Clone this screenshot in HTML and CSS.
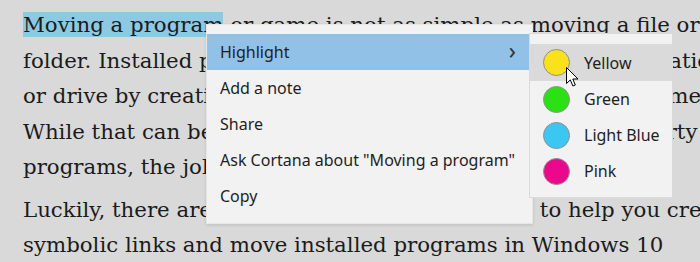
FILE: index.html
```html
<!DOCTYPE html>
<html lang="en">
<head>
  <meta charset="UTF-8">
  <title>Reader - Highlight</title>
  <link rel="stylesheet" href="styles.css">
</head>
<body>
  <div class="page">
    <p class="para"><span class="mark">Moving a program</span> or game is not as simple as moving a file or<br>folder. Installed programs can only be moved to another location<br>or drive by creating symbolic links, but it is quite cumbersome.<br>While that can be done manually, there are several third-party<br>programs, the job becomes much easier with them.</p>
    <p class="para">Luckily, there are two good free tools out there to help you create<br>symbolic links and move installed programs in Windows 10</p>
  </div>

  <div class="menu">
    <div class="item active">Highlight <span class="chev">&#x203A;</span></div>
    <div class="item">Add a note</div>
    <div class="item">Share</div>
    <div class="item">Ask Cortana about "Moving a program"</div>
    <div class="item">Copy</div>
  </div>

  <div class="submenu">
    <div class="sub hover"><span class="dot yellow"></span>Yellow</div>
    <div class="sub"><span class="dot green"></span>Green</div>
    <div class="sub"><span class="dot blue"></span>Light Blue</div>
    <div class="sub"><span class="dot pink"></span>Pink</div>
  </div>

  <svg class="cursor" width="13" height="21" viewBox="0 0 13 21">
    <path d="M0.5 0.5 L0.5 16.5 L4.3 12.9 L6.9 19 L9.3 18 L6.8 12 L12 12 Z" fill="#fff" stroke="#000" stroke-width="1" stroke-linejoin="miter"/>
  </svg>
</body>
</html>
```

FILE: styles.css
```css
* { box-sizing: border-box; }
html, body { margin: 0; height: 100%; overflow: hidden; }
body { background: #d9d9d9; font-family: "DejaVu Serif", serif; color: #1b1b1b; }
.page { padding: 7px 0 0 23px; white-space: nowrap; }
.para { margin: 0 0 7px; font-size: 21.3px; line-height: 35.5px; }
.mark { background: #8ec9e3; }

.menu { position: absolute; left: 206px; top: 24px; width: 327px; height: 200px; padding: 9px 0 11px; background: #f2f2f2; border: 1px solid #e6e6e6; box-shadow: 0 1px 3px rgba(0,0,0,0.12); font-family: "Noto Sans", sans-serif; font-size: 16px; color: #1e1e1e; }
.item { height: 36px; display: flex; align-items: center; padding-left: 13px; padding-right: 16px; }
.item.active { background: #91c1e7; justify-content: space-between; }
.chev { font-size: 23px; color: #333; line-height: 1; margin-top: -4px; }

.submenu { position: absolute; left: 529px; top: 33px; width: 144px; height: 165px; padding: 10px 0; background: #f2f2f2; border: 1px solid #dadada; font-family: "Noto Sans", sans-serif; font-size: 16px; color: #1e1e1e; }
.sub { height: 36px; display: flex; align-items: center; padding-left: 13px; gap: 14px; }
.sub.hover { background: #dadada; height: 37px; }
.dot { width: 27px; height: 27px; border-radius: 50%; border: 1px solid #8f8f8f; flex: none; }
.dot.yellow { background: #f9e11c; }
.dot.green { background: #2be113; }
.dot.blue { background: #3cc6f2; }
.dot.pink { background: #ec088c; }

.cursor { position: absolute; left: 566px; top: 67px; }
```
